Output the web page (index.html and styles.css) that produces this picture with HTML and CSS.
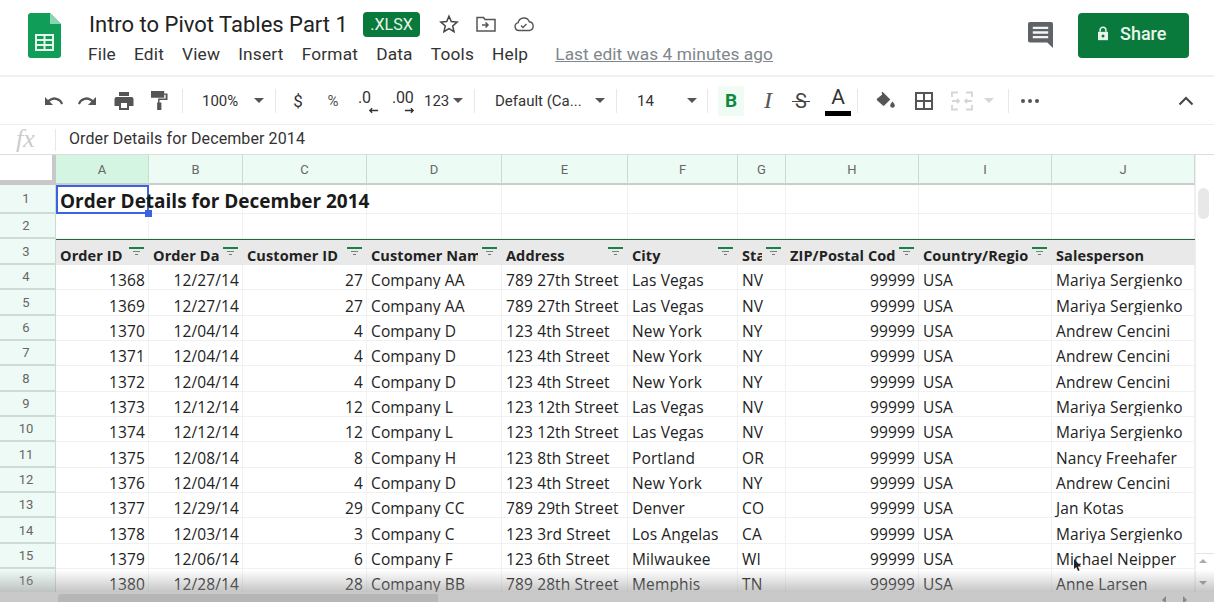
FILE: index.html
```html
<!DOCTYPE html>
<html lang="en">
<head>
<meta charset="utf-8">
<title>Intro to Pivot Tables Part 1</title>
<link rel="stylesheet" href="styles.css">
</head>
<body>
<div class="app">
<header class="top">
  <svg class="logo" viewBox="0 0 33 45" width="33" height="45"><path d="M3 0h19l11 11v31a3 3 0 0 1-3 3H3a3 3 0 0 1-3-3V3a3 3 0 0 1 3-3z" fill="#0f9d58"/><path d="M22 0l11 11H22z" fill="#8bd6b2"/><path d="M7 21h19v17H7zM9 23v3h6.500v-3zM17.500 23v3H24v-3zM9 28v3h6.500v-3zM17.500 28v3H24v-3zM9 33v3h6.500v-3zM17.500 33v3H24v-3z" fill="#e6f6ee" fill-rule="evenodd"/></svg>
  <div class="titles">
    <div class="title-row">
      <span class="doc">Intro to Pivot Tables Part 1</span>
      <span class="badge">.XLSX</span>
      <svg class="ti star" viewBox="0 0 20 20" width="20" height="20"><path d="M10 2.200l2.300 5.400 5.800.5-4.400 3.800 1.300 5.700-5-3-5 3 1.300-5.700L1.900 8.100l5.800-.5z" fill="none" stroke="#444" stroke-width="1.500"/></svg>
      <svg class="ti move" viewBox="0 0 20 18" width="20" height="18"><path d="M1 3V16h18V4.500H9L7.500 2.500H1z" fill="none" stroke="#555" stroke-width="1.500"/><path d="M6 10h6M9.500 7.500L12 10l-2.500 2.500" fill="none" stroke="#555" stroke-width="1.500"/></svg>
      <svg class="ti cloud" viewBox="0 0 22 16" width="22" height="16"><path d="M6 14.500a4 4 0 0 1-.8-7.900A5.800 5.800 0 0 1 16.300 5.800 4.400 4.400 0 0 1 16.500 14.500z" fill="none" stroke="#555" stroke-width="1.400"/><path d="M8 9.500l2 2 3.500-3.500" fill="none" stroke="#555" stroke-width="1.300"/></svg>
    </div>
    <nav class="menu">
      <span>File</span><span>Edit</span><span>View</span><span>Insert</span><span>Format</span><span>Data</span><span>Tools</span><span>Help</span>
      <a class="last">Last edit was 4 minutes ago</a>
    </nav>
  </div>
  <svg class="comment" viewBox="0 0 26 28" width="25" height="26" preserveAspectRatio="none"><path d="M2 0h22a2 2 0 0 1 2 2v26l-6-6H2a2 2 0 0 1-2-2V2a2 2 0 0 1 2-2z" fill="#5f6368"/><path d="M5 5h16v2.600H5zM5 10h16v2.600H5zM5 15h16v2.600H5z" fill="#f4f4f4"/></svg>
  <button class="share"><svg viewBox="0 0 14 18" width="12" height="15"><path d="M3.500 7V5a3.500 3.500 0 0 1 7 0v2" fill="none" stroke="#e8f5ec" stroke-width="1.800"/><path d="M1 7h12v10H1z" fill="#e8f5ec"/><circle cx="7" cy="12" r="1.800" fill="#0a7a3c"/></svg>Share</button>
</header>

<div class="toolbar">
  <span class="tb"><svg viewBox="0 0 22 12" width="22" height="12"><path d="M3 2v8h8L7.600 6.600A7 7 0 0 1 19 9.500l2-.7A9 9 0 0 0 6 5L3 2z" fill="#555"/></svg></span>
  <span class="tb"><svg viewBox="0 0 22 12" width="22" height="12"><path d="M19 2v8h-8l3.400-3.400A7 7 0 0 0 3 9.500l-2-.7A9 9 0 0 1 16 5l3-3z" fill="#555"/></svg></span>
  <span class="tb"><svg viewBox="0 0 20 20" width="20" height="20"><path d="M5 1h10v4H5zM2.500 6h15A2 2 0 0 1 19.500 8v7H15v4H5v-4H.5V8a2 2 0 0 1 2-2z" fill="#555"/><path d="M7 12h6v5H7z" fill="#fff"/></svg></span>
  <span class="tb"><svg viewBox="0 0 18 20" width="17" height="19"><path d="M0 0h14v7H0zM14 2.500h3.500v7H9v2.500h2v8H6.500v-8h1V8h8V4H14z" fill="#555"/></svg></span>
  <i class="sep s1"></i>
  <span class="zoomv">100%</span><i class="caret"></i>
  <i class="sep s2"></i>
  <span class="tb t dollar">$</span>
  <span class="tb t pct">%</span>
  <span class="tb dec d0"><b>.0</b><svg viewBox="0 0 12 7" width="11" height="7"><path d="M11 3.500H2M4.500 1L2 3.500 4.500 6" fill="none" stroke="#333" stroke-width="1.500"/></svg></span>
  <span class="tb dec inc"><b>.00</b><svg viewBox="0 0 12 7" width="11" height="7"><path d="M1 3.500h9M7.500 1L10 3.500 7.500 6" fill="none" stroke="#333" stroke-width="1.500"/></svg></span>
  <span class="num">123</span><i class="caret"></i>
  <i class="sep s3"></i>
  <span class="fontn">Default (Ca...</span><i class="caret"></i>
  <i class="sep s4"></i>
  <span class="size">14</span><i class="caret"></i>
  <i class="sep s5"></i>
  <span class="bold">B</span>
  <span class="ital">I</span>
  <span class="strike">S</span>
  <span class="colora">A</span>
  <i class="sep s6"></i>
  <span class="tb fill"><svg viewBox="0 0 20 18" width="20" height="18"><path d="M5.500 0l1.300 0 7.500 7.500-6 6a1 1 0 0 1-1.400 0L1 8.200a1 1 0 0 1 0-1.400L6.200 2.500z" fill="#555"/><path d="M16.500 9.500s2.300 2.600 2.300 4a2.300 2.300 0 0 1-4.600 0c0-1.400 2.300-4 2.300-4z" fill="#555"/></svg></span>
  <span class="tb grid-i"><svg viewBox="0 0 18 18" width="18" height="18"><path d="M1 1h16v16H1zM9 1v16M1 9h16" fill="none" stroke="#555" stroke-width="2"/></svg></span>
  <span class="tb merge"><svg viewBox="0 0 22 20" width="22" height="20"><path d="M1 6V1.500h6M15 1.500h6V6M1 14v4.500h6M15 18.500h6V14M1 10h7M6 8l2 2-2 2M21 10h-7M16 8l-2 2 2 2" fill="none" stroke="#d5d5da" stroke-width="1.800"/></svg></span><i class="caret c5"></i>
  <i class="sep s7"></i>
  <span class="dots"><i></i><i></i><i></i></span>
  <svg class="chev" viewBox="0 0 16 10" width="16" height="10"><path d="M1.500 8.500L8 2l6.500 6.500" fill="none" stroke="#444" stroke-width="2"/></svg>
</div>

<div class="fbar">
  <span class="fx">fx</span>
  <span class="ftext">Order Details for December 2014</span>
</div>

<div class="sheet-wrap">
<div class="sheet">
  <div class="corner"></div>
  <div class="ch on">A</div><div class="ch">B</div><div class="ch">C</div><div class="ch">D</div><div class="ch">E</div><div class="ch">F</div><div class="ch">G</div><div class="ch">H</div><div class="ch">I</div><div class="ch">J</div>

  <div class="rh h1">1</div>
  <div class="c title-cell">Order Details for December 2014<i class="handle"></i></div><div class="c"></div><div class="c"></div><div class="c"></div><div class="c"></div><div class="c"></div><div class="c"></div><div class="c"></div><div class="c"></div><div class="c"></div>

  <div class="rh">2</div>
  <div class="c"></div><div class="c"></div><div class="c"></div><div class="c"></div><div class="c"></div><div class="c"></div><div class="c"></div><div class="c"></div><div class="c"></div><div class="c"></div>

  <div class="rh">3</div>
  <div class="c hd"><span>Order ID</span><i class="flt"></i></div><div class="c hd"><span>Order Date</span><i class="flt"></i></div><div class="c hd"><span>Customer ID</span><i class="flt"></i></div><div class="c hd"><span>Customer Name</span><i class="flt"></i></div><div class="c hd"><span>Address</span><i class="flt"></i></div><div class="c hd"><span>City</span><i class="flt"></i></div><div class="c hd"><span>State</span><i class="flt"></i></div><div class="c hd"><span>ZIP/Postal Code</span><i class="flt"></i></div><div class="c hd"><span>Country/Region</span><i class="flt"></i></div><div class="c hd"><span>Salesperson</span></div>

  <div class="rh">4</div><div class="c r">1368</div><div class="c r">12/27/14</div><div class="c r">27</div><div class="c">Company AA</div><div class="c">789 27th Street</div><div class="c">Las Vegas</div><div class="c">NV</div><div class="c r">99999</div><div class="c">USA</div><div class="c">Mariya Sergienko</div>
  <div class="rh">5</div><div class="c r">1369</div><div class="c r">12/27/14</div><div class="c r">27</div><div class="c">Company AA</div><div class="c">789 27th Street</div><div class="c">Las Vegas</div><div class="c">NV</div><div class="c r">99999</div><div class="c">USA</div><div class="c">Mariya Sergienko</div>
  <div class="rh">6</div><div class="c r">1370</div><div class="c r">12/04/14</div><div class="c r">4</div><div class="c">Company D</div><div class="c">123 4th Street</div><div class="c">New York</div><div class="c">NY</div><div class="c r">99999</div><div class="c">USA</div><div class="c">Andrew Cencini</div>
  <div class="rh">7</div><div class="c r">1371</div><div class="c r">12/04/14</div><div class="c r">4</div><div class="c">Company D</div><div class="c">123 4th Street</div><div class="c">New York</div><div class="c">NY</div><div class="c r">99999</div><div class="c">USA</div><div class="c">Andrew Cencini</div>
  <div class="rh">8</div><div class="c r">1372</div><div class="c r">12/04/14</div><div class="c r">4</div><div class="c">Company D</div><div class="c">123 4th Street</div><div class="c">New York</div><div class="c">NY</div><div class="c r">99999</div><div class="c">USA</div><div class="c">Andrew Cencini</div>
  <div class="rh">9</div><div class="c r">1373</div><div class="c r">12/12/14</div><div class="c r">12</div><div class="c">Company L</div><div class="c">123 12th Street</div><div class="c">Las Vegas</div><div class="c">NV</div><div class="c r">99999</div><div class="c">USA</div><div class="c">Mariya Sergienko</div>
  <div class="rh">10</div><div class="c r">1374</div><div class="c r">12/12/14</div><div class="c r">12</div><div class="c">Company L</div><div class="c">123 12th Street</div><div class="c">Las Vegas</div><div class="c">NV</div><div class="c r">99999</div><div class="c">USA</div><div class="c">Mariya Sergienko</div>
  <div class="rh">11</div><div class="c r">1375</div><div class="c r">12/08/14</div><div class="c r">8</div><div class="c">Company H</div><div class="c">123 8th Street</div><div class="c">Portland</div><div class="c">OR</div><div class="c r">99999</div><div class="c">USA</div><div class="c">Nancy Freehafer</div>
  <div class="rh">12</div><div class="c r">1376</div><div class="c r">12/04/14</div><div class="c r">4</div><div class="c">Company D</div><div class="c">123 4th Street</div><div class="c">New York</div><div class="c">NY</div><div class="c r">99999</div><div class="c">USA</div><div class="c">Andrew Cencini</div>
  <div class="rh">13</div><div class="c r">1377</div><div class="c r">12/29/14</div><div class="c r">29</div><div class="c">Company CC</div><div class="c">789 29th Street</div><div class="c">Denver</div><div class="c">CO</div><div class="c r">99999</div><div class="c">USA</div><div class="c">Jan Kotas</div>
  <div class="rh">14</div><div class="c r">1378</div><div class="c r">12/03/14</div><div class="c r">3</div><div class="c">Company C</div><div class="c">123 3rd Street</div><div class="c">Los Angelas</div><div class="c">CA</div><div class="c r">99999</div><div class="c">USA</div><div class="c">Mariya Sergienko</div>
  <div class="rh">15</div><div class="c r">1379</div><div class="c r">12/06/14</div><div class="c r">6</div><div class="c">Company F</div><div class="c">123 6th Street</div><div class="c">Milwaukee</div><div class="c">WI</div><div class="c r">99999</div><div class="c">USA</div><div class="c">Michael Neipper</div>
  <div class="rh">16</div><div class="c r">1380</div><div class="c r">12/28/14</div><div class="c r">28</div><div class="c">Company BB</div><div class="c">789 28th Street</div><div class="c">Memphis</div><div class="c">TN</div><div class="c r">99999</div><div class="c">USA</div><div class="c">Anne Larsen</div>
</div>
<aside class="vscroll"><i class="thumb"></i><i class="vdiv"></i></aside>
<div class="shade"></div>
<div class="hscroll"><i></i></div>
<span class="arrow up"></span><span class="arrow down"></span><span class="arrow left"></span><span class="arrow right"></span>
<svg class="cursor" viewBox="0 0 8 12" width="8" height="12"><path d="M0 0v10l2.300-2 1.700 4 1.600-.7-1.700-3.800H7z" fill="#222"/></svg>
</div>
</div>
</body>
</html>
```
FILE: styles.css
```css
* { box-sizing: border-box; }
html, body { margin: 0; padding: 0; height: 100%; overflow: hidden; background: #fff; }
.app { width: 1214px; height: 602px; display: flex; flex-direction: column; font-family: Roboto, "Liberation Sans", sans-serif; color: #3c4043; }

.top { height: 77px; flex: none; display: flex; align-items: flex-start; border-bottom: 2px solid #f1f1f4; padding: 11px 25px 0 28px; }
.logo { flex: none; margin-top: 2px; }
.titles { margin-left: 28px; flex: 1; }
.title-row { display: flex; align-items: center; height: 26px; }
.doc { font-size: 22px; color: #222; width: 274px; white-space: nowrap; }
.badge { width: 57px; height: 25px; background: #0a7a3c; color: #e8f5ec; border-radius: 4px; font-size: 16px; display: flex; align-items: center; justify-content: center; }
.ti { flex: none; }
.star { margin-left: 19px; }
.move { margin-left: 17px; }
.cloud { margin-left: 17px; }
.menu { display: flex; margin: 6px 0 0 -1px; font-size: 17.300px; color: #333; height: 22px; align-items: center; }
.menu span { margin-right: 18px; letter-spacing: .2px; }
.last { margin-left: 9px; color: #80868b; text-decoration: underline; letter-spacing: .08px; }
.comment { margin: 11px 0 0 0; flex: none; }
.share { margin: 2px 0 0 25px; width: 111px; height: 45px; border: 0; border-radius: 4px; background: #0a7a3c; color: #e8f5ec; font: 500 18px Roboto, sans-serif; display: flex; align-items: center; gap: 11px; padding: 0 0 4px 19px; flex: none; }

.toolbar { height: 48px; flex: none; display: flex; align-items: center; border-bottom: 1px solid #eee; padding-left: 35px; font-size: 15px; color: #333; }
.tb { width: 35.500px; height: 24px; display: flex; align-items: center; justify-content: center; flex: none; }
.sep { width: 1px; height: 24px; background: #e8e8e8; flex: none; }
.s1 { margin-left: 5px; }
.zoomv { margin-left: 19px; width: 52px; flex: none; }
.caret { width: 0; height: 0; border: 5px solid transparent; border-top: 5px solid #555; border-bottom: 0; flex: none; }
.s2 { margin-left: 11px; }
.t { color: #333; }
.dollar { margin-left: 4px; width: 36px; font-size: 17px; }
.pct { width: 34px; font-size: 15px; color: #555; }
.dec { flex-direction: column; height: 30px; position: relative; align-items: flex-start; }
.d0 { width: 28px; padding-left: 8px; }
.d0 svg { margin: -1px 0 0 10px; }
.dec b { font-weight: 400; font-size: 16px; line-height: 20px; letter-spacing: -.2px; }
.inc { margin-left: 5px; width: 38px; padding-left: 9px; }
.inc svg { margin: -1px 0 0 12px; }
.num { margin-left: 3px; width: 29px; flex: none; }
.s3 { margin-left: 11px; }
.fontn { margin-left: 20px; width: 100px; white-space: nowrap; flex: none; }
.s4 { margin-left: 11px; }
.size { margin-left: 20px; width: 50px; flex: none; }
.s5 { margin-left: 10px; }
.bold { margin-left: 10px; width: 26px; height: 30px; background: #f0fbf4; color: #0a8a3c; font: 700 19px Roboto, sans-serif; text-align: center; line-height: 30px; flex: none; }
.ital { margin-left: 12px; width: 24px; text-align: center; font: italic 400 24px "Liberation Serif", serif; color: #555; flex: none; }
.strike { margin-left: 9px; width: 24px; text-align: center; font-size: 20px; color: #444; position: relative; flex: none; }
.strike::after { content: ""; position: absolute; left: 3px; right: 3px; top: 50%; height: 1.500px; background: #444; }
.colora { margin-left: 12px; width: 26px; height: 30px; font-size: 21px; text-align: center; color: #333; line-height: 22px; border-bottom: 5px solid #000; flex: none; }
.s6 { margin-left: 6px; }
.fill { margin-left: 10px; width: 36px; }
.grid-i { width: 40px; }
.merge { width: 36px; }
.c5 { margin-left: 4px; border-top-color: #d5d5da; }
.s7 { margin-left: 14px; }
.dots { margin-left: 12px; display: flex; gap: 3px; }
.dots i { width: 4px; height: 4px; border-radius: 50%; background: #555; }
.chev { margin-left: 139px; }

.fbar { height: 30px; flex: none; display: flex; align-items: center; border-bottom: 1px solid #ddd; }
.fx { width: 56px; height: 22px; border-right: 1px solid #e8e8e8; padding-left: 16px; font: italic 26px/20px "Liberation Serif", serif; color: #ccc; }
.ftext { margin-left: 13px; font-size: 16px; letter-spacing: .1px; color: #333; padding-bottom: 2px; }

.sheet-wrap { position: relative; flex: 1; overflow: hidden; }
.sheet { width: 1195px; display: grid; grid-template-columns: 56px 93px 94px 124px 135px 126px 110px 48px 133px 133px 143px; grid-template-rows: 30px 29px 25px 26px repeat(13, 25.350px); font-family: "Open Sans", "Noto Sans", sans-serif; font-size: 15.500px; letter-spacing: .13px; color: #222; }
.corner { background: #fff; border-right: 4px solid #c8c8c8; border-bottom: 5px solid #c8c8c8; }
.ch { background: #ecfbf4; border-right: 1px solid #c9dcd3; border-bottom: 2px solid #ccc; display: flex; align-items: center; justify-content: center; font-family: Roboto, sans-serif; font-size: 13px; letter-spacing: 0; color: #666; }
.ch.on { background: #d3f5e1; }
.rh { background: #eefaf5; border-right: 1px solid #c9dcd3; border-bottom: 2px solid #cfdcd6; display: flex; align-items: center; justify-content: center; padding-right: 3px; font-family: Roboto, sans-serif; font-size: 13px; letter-spacing: 0; color: #666; }
.c { border-right: 1px solid #f1f1f1; border-bottom: 1px solid #f1f1f1; padding: 6px 4px 0; display: flex; align-items: center; white-space: nowrap; overflow: hidden; position: relative; }
.c.r { justify-content: flex-end; padding-right: 3px; }
.title-cell { overflow: visible; font-size: 19px; letter-spacing: 0; font-weight: 700; border: 2px solid #3b62e0; padding: 2px 0 0 2px; z-index: 2; color: #1a1a1a; }
.handle { position: absolute; right: -5px; bottom: -5px; width: 7px; height: 7px; background: #3b62e0; }
.hd { background: #e9e9e9; font-size: 14.500px; letter-spacing: .1px; font-weight: 700; border-top: 1px solid #25663e; border-right: 0; border-bottom: 0; padding: 5px 24.500px 0 4px; }
.hd span { overflow: hidden; display: block; }
.flt { position: absolute; right: 5px; top: 7px; width: 15px; height: 8px; background: linear-gradient(#1a8048 0 2px, transparent 2px); }
.flt::after { content: ""; position: absolute; left: 4px; top: 4px; width: 7px; height: 1px; background: #6d8a78; }
.flt::before { content: ""; position: absolute; left: 6px; top: 7px; width: 3px; height: 1px; background: #777; }

.vscroll { position: absolute; left: 1195px; top: 0; width: 19px; height: 100%; background: #fff; border-left: 1px solid #eee; }
.thumb { position: absolute; left: 2px; top: 33px; width: 11px; height: 31px; background: #e8e8e8; border-radius: 6px; }
.vdiv { position: absolute; left: 0; right: 0; top: 398px; height: 1px; background: #e4e4e4; }
.shade { position: absolute; left: 0; right: 0; top: 415px; height: 22px; background: linear-gradient(rgba(160,160,160,0), rgba(150,150,150,.55)); pointer-events: none; }
.hscroll { position: absolute; left: 0; right: 0; bottom: 0; height: 10px; background: #c9c9c9; }
.hscroll i { position: absolute; left: 58px; width: 380px; top: 2px; bottom: 0; background: #b6b6b6; border-radius: 4px 0 0 0; }
.arrow { position: absolute; width: 0; height: 0; border: 4px solid transparent; }
.up { left: 1199px; top: 404px; border-bottom-color: #aaa; border-top: 0; }
.down { left: 1199px; top: 426px; border-top-color: #999; border-bottom: 0; }
.left { left: 1162px; top: 441px; border-right-color: #888; border-left: 0; }
.right { left: 1183px; top: 441px; border-left-color: #888; border-right: 0; }
.cursor { position: absolute; left: 1074px; top: 404px; }
```
